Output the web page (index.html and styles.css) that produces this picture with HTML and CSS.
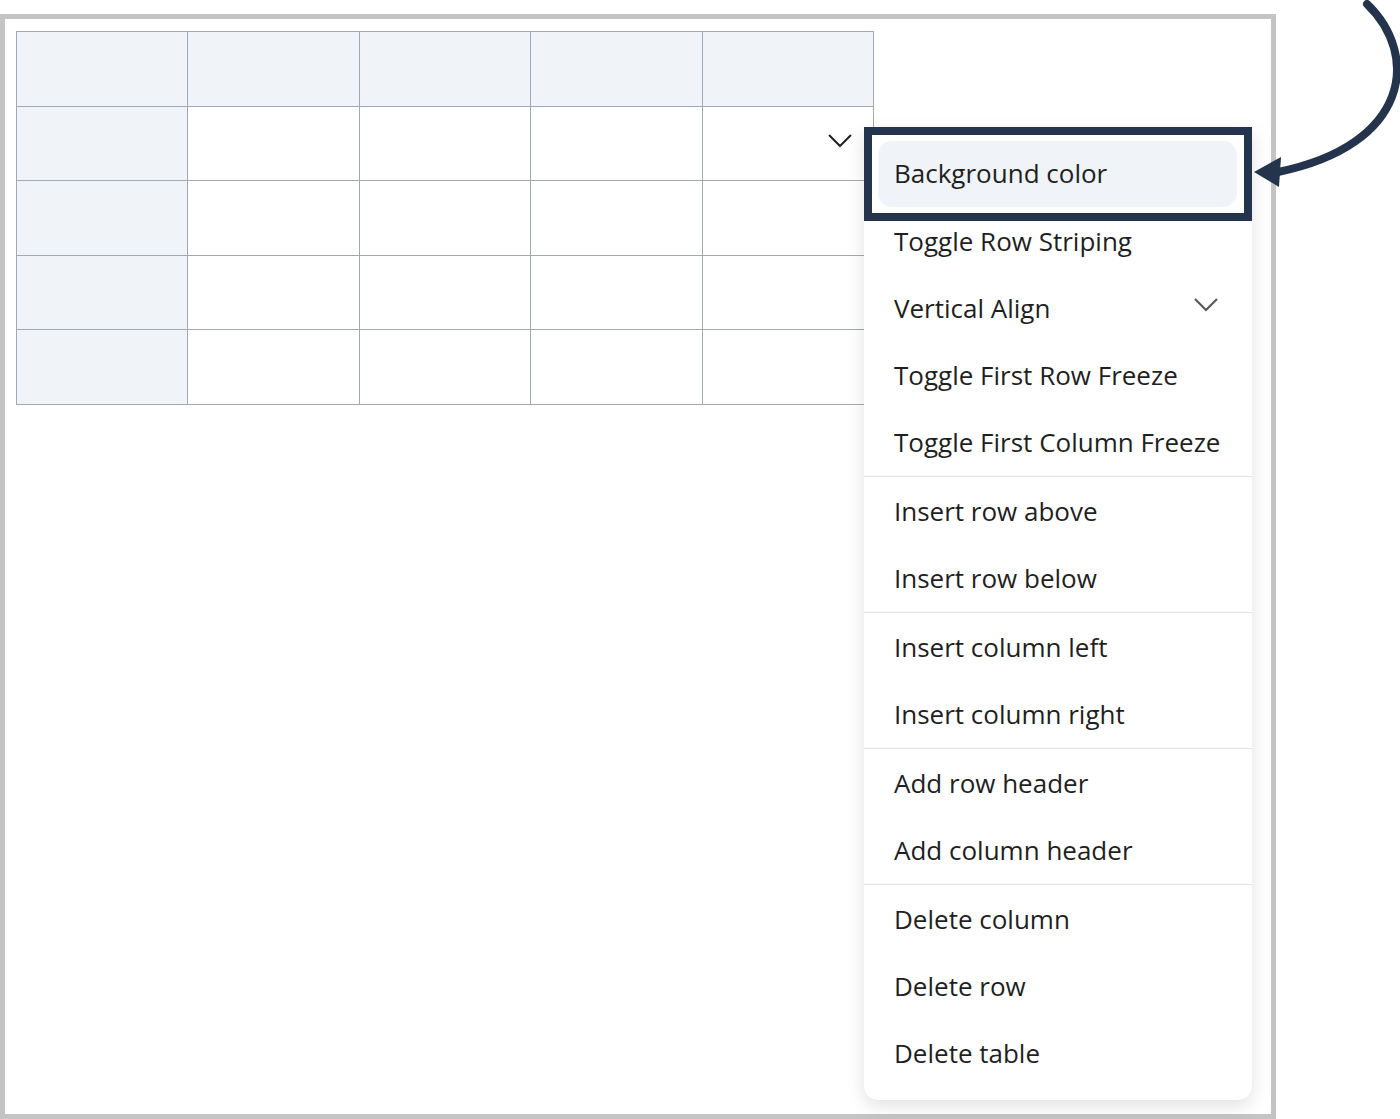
FILE: index.html
```html
<!DOCTYPE html>
<html lang="en">
<head>
  <meta charset="UTF-8" />
  <meta name="viewport" content="width=device-width, initial-scale=1" />
  <title>Table Options Menu</title>
  <link rel="stylesheet" href="styles.css">
</head>
<body>

  <!-- Editor frame -->
  <div class="frame">
    <table class="grid">
      <tr class="head">
        <td></td><td></td><td></td><td></td><td></td>
      </tr>
      <tr>
        <td class="side"></td><td></td><td></td><td></td>
        <td class="picked">
          <svg class="cell-caret" width="26" height="16" viewBox="0 0 26 16">
            <path d="M2 2 L13 13 L24 2" fill="none" stroke="#222" stroke-width="2" />
          </svg>
        </td>
      </tr>
      <tr>
        <td class="side"></td><td></td><td></td><td></td><td></td>
      </tr>
      <tr>
        <td class="side"></td><td></td><td></td><td></td><td></td>
      </tr>
      <tr>
        <td class="side"></td><td></td><td></td><td></td><td></td>
      </tr>
    </table>

    <!-- Dropdown menu -->
    <div class="menu">
      <div class="item active">Background color</div>
      <div class="item">Toggle Row Striping</div>
      <div class="item">
        Vertical Align
        <svg class="item-caret" width="26" height="16" viewBox="0 0 26 16">
          <path d="M2 2 L13 13 L24 2" fill="none" stroke="#555" stroke-width="2" />
        </svg>
      </div>
      <div class="item">Toggle First Row Freeze</div>
      <div class="item">Toggle First Column Freeze</div>
      <div class="divider"></div>
      <div class="item">Insert row above</div>
      <div class="item">Insert row below</div>
      <div class="divider"></div>
      <div class="item">Insert column left</div>
      <div class="item">Insert column right</div>
      <div class="divider"></div>
      <div class="item">Add row header</div>
      <div class="item">Add column header</div>
      <div class="divider"></div>
      <div class="item">Delete column</div>
      <div class="item">Delete row</div>
      <div class="item">Delete table</div>
    </div>

    <!-- Callout box around the first item -->
    <div class="callout"></div>
  </div>

  <!-- Callout arrow -->
  <svg class="arrow" width="1400" height="240" viewBox="0 0 1400 240">
    <path d="M1367 4 C1420 55, 1410 145, 1278 172" fill="none" stroke="#24344d" stroke-width="8" stroke-linecap="round" />
    <polygon points="1254,172 1281,157 1279,187" fill="#24344d" />
  </svg>

</body>
</html>
```

FILE: styles.css
```css
* {
  margin: 0;
  padding: 0;
  box-sizing: border-box;
}

body {
  background: #fff;
  color: #222;
  font-family: "Open Sans", "Noto Sans", Arial, sans-serif;
  width: 1400px;
  height: 1119px;
  overflow: hidden;
  position: relative;
}

.frame {
  position: relative;
  margin-top: 14px;
  width: 1276px;
  height: 1105px;
  border: 5px solid #c4c4c4;
  padding: 12px 0 0 11px;
  background: #fff;
}

.grid {
  border-collapse: collapse;
  table-layout: fixed;
  width: 858px;
  height: 374px;
}

.grid td {
  border: 1px solid #a3a9b1;
  height: 74.6px;
  padding: 0;
}

.grid .head td,
.grid td.side {
  background: #f0f3f8;
}

.grid td.picked {
  vertical-align: top;
}

.cell-caret {
  display: block;
  margin: 26px 20px 0 auto;
}

/* Menu */
.menu {
  position: absolute;
  left: 859px;
  top: 108px;
  width: 388px;
  padding: 14px 15px 13px 14px;
  background: #fff;
  border-radius: 0 0 14px 14px;
  box-shadow: 0 6px 18px rgba(0, 0, 0, 0.12);
}

.item {
  height: 67px;
  display: flex;
  align-items: center;
  justify-content: space-between;
  padding: 0 18px 2px 16px;
  font-size: 26px;
  color: #1f1f1f;
  border-radius: 14px;
  white-space: nowrap;
}

.item.active {
  background: #f0f3f8;
  height: 66px;
  margin-bottom: 1px;
}

.item-caret {
  margin-top: -6px;
}

.divider {
  height: 1px;
  margin: 0 -15px 1px -14px;
  background: #e3e3e3;
}

.callout {
  position: absolute;
  left: 859px;
  top: 108px;
  width: 388px;
  height: 94px;
  border: 8px solid #24344d;
}

.arrow {
  position: absolute;
  left: 0;
  top: 0;
}
```
